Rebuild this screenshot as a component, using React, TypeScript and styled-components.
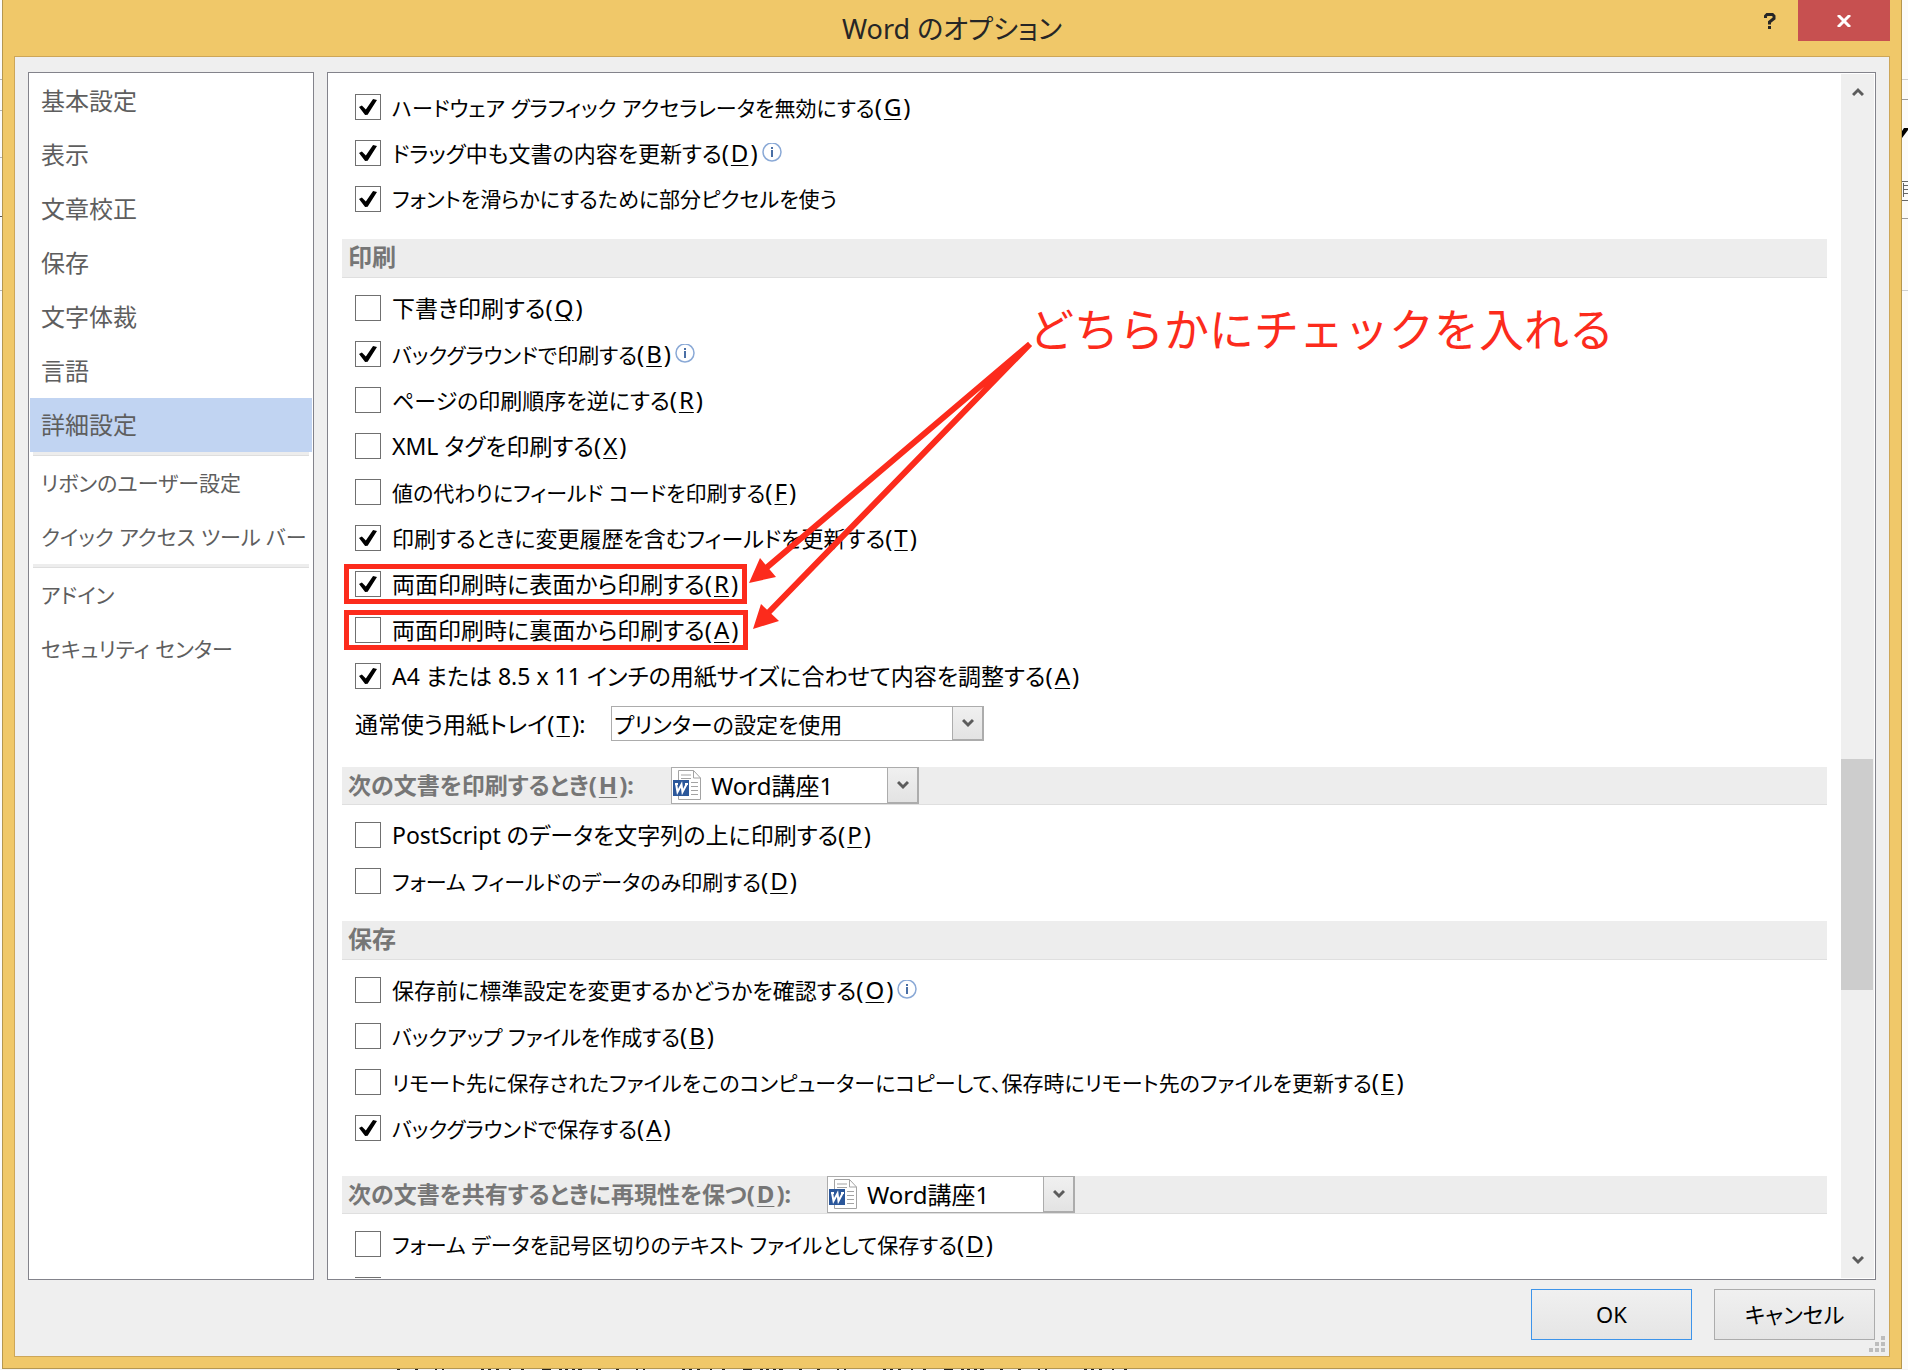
import React from "react";
import styled, { createGlobalStyle, css } from "styled-components";

const Global = createGlobalStyle`
  *, *::before, *::after { box-sizing: border-box; }
  body {
    margin: 0;
    background: #f4f4f4;
    font-family: "Noto Sans", "Noto Sans CJK JP", sans-serif;
    font-feature-settings: "palt";
    font-size: 22px;
    line-height: 30px;
    color: #000;
  }
  button, select, input { font: inherit; color: inherit; margin: 0; font-feature-settings: inherit; }
`;

const RED = "#fc2b1c";
const SIZES = { s: 21, m: 22, l: 23, xl: 24 };
type Size = keyof typeof SIZES;

const Desktop = styled.div`
  display: grid;
  grid-template-columns: 2px minmax(0, 1fr) 6px;
  grid-template-rows: minmax(0, 1fr) 1px;
  height: 100vh;
  overflow: hidden;
`;

const BackStrip = styled.svg`
  display: block;
  width: 100%;
  height: 100%;
  background: #fbfbfb;
`;

const BackFoot = styled.svg`
  display: block;
  grid-column: 1 / -1;
  width: 100%;
  height: 1px;
`;

const Dialog = styled.section`
  display: flex;
  flex-direction: column;
  min-height: 0;
  background: #f0c869;
  border: solid #b5974f;
  border-width: 0 1px 1px;
  padding: 0 11px 11px;
`;

const TitleBar = styled.header`
  display: grid;
  grid-template-columns: 1fr auto 1fr;
  height: 56px;
  flex: none;
`;

const Title = styled.h1`
  grid-column: 2;
  margin: 0;
  font-size: 27px;
  line-height: 58px;
  font-weight: 400;
  color: #262626;
`;

const WindowButtons = styled.div`
  display: flex;
  justify-content: flex-end;
`;

const CaptionButton = styled.button<{ $close?: boolean }>`
  display: flex;
  align-items: center;
  justify-content: center;
  width: ${(p) => (p.$close ? 92 : 56)}px;
  height: 41px;
  padding: 0;
  border: 0;
  background: ${(p) => (p.$close ? "#c75050" : "transparent")};
`;

const Client = styled.div`
  flex: 1;
  min-height: 0;
  display: flex;
  flex-direction: column;
  border: 1px solid #cda658;
  background: #efefef;
  padding: 15px 13px 0;
`;

const Panels = styled.div`
  flex: 1;
  min-height: 0;
  display: flex;
  gap: 13px;
`;

const Sidebar = styled.nav`
  width: 286px;
  flex: none;
  border: 1px solid #83838b;
  background: #fff;
  padding: 1px;
  display: flex;
  flex-direction: column;
`;

const NavItem = styled.button<{ $active?: boolean; $size: Size }>`
  display: block;
  flex: none;
  height: 54px;
  padding: 0 11px;
  border: 0;
  text-align: left;
  white-space: nowrap;
  font-size: ${(p) => SIZES[p.$size]}px;
  color: #5e5e5e;
  background: ${(p) => (p.$active ? "#c1d4f2" : "transparent")};
`;

const NavRule = styled.hr`
  flex: none;
  width: 276px;
  height: 4px;
  margin: 0 auto;
  border: 0;
  border-bottom: 1px solid #dedede;
  background: #ededed;
`;

const Pane = styled.main`
  position: relative;
  flex: 1;
  min-width: 0;
  display: flex;
  border: 1px solid #83838b;
  background: #fff;
  padding: 1px;
`;

const Content = styled.div`
  flex: 1;
  min-width: 0;
  overflow: hidden;
  padding: 10px 14px 0 13px;
`;

const SectionHead = styled.div<{ $wide?: boolean }>`
  display: flex;
  align-items: center;
  height: ${(p) => (p.$wide ? 38 : 39)}px;
  margin: 17px 0 7px;
  padding-left: 6px;
  background: #ededed;
  border-bottom: 1px solid #dfdfdf;
  color: #767676;
  font-weight: 700;
`;

const Spacer = styled.div`
  height: 8px;
`;

const HeadTitle = styled.h2`
  margin: 0;
  padding-bottom: 2px;
  font: inherit;
  font-size: 24px;
`;

const HeadLabel = styled.label<{ $w: number }>`
  width: ${(p) => p.$w}px;
  padding-bottom: 2px;
  font-size: 23px;
  white-space: nowrap;
`;

const KeyMark = styled.span`
  font-size: 24px;
  u {
    margin: 0 2px;
    text-decoration-thickness: 1px;
    text-underline-offset: 3px;
  }
`;

const Row = styled.div`
  display: flex;
  align-items: center;
  height: 46px;
  padding-left: 7px;
`;

const Option = styled.label<{ $marked?: boolean; $size: Size }>`
  display: flex;
  align-items: center;
  gap: 11px;
  height: 30px;
  padding: 0 4px 0 6px;
  font-size: ${(p) => SIZES[p.$size]}px;
  white-space: nowrap;
  ${(p) => p.$marked && css`outline: 5px solid ${RED};`}
`;

const Box = styled.input`
  appearance: none;
  display: grid;
  place-items: center;
  flex: none;
  width: 26px;
  height: 26px;
  border: 1px solid #707070;
  background: #fff;
  &:checked::before {
    content: "";
    width: 18px;
    height: 16px;
    background: #000;
    clip-path: polygon(0 50%, 16% 40%, 38% 66%, 78% 0, 100% 6%, 48% 98%, 34% 100%);
  }
`;

const InfoMark = styled.svg`
  flex: none;
  width: 20px;
  height: 20px;
`;

const TrayRow = styled.div`
  display: flex;
  align-items: center;
  height: 51px;
  padding: 0 0 2px 13px;
`;

const TrayLabel = styled.label`
  width: 256px;
  font-size: 23px;
  white-space: nowrap;
`;

const Combo = styled.div<{ $w: number; $h: number }>`
  position: relative;
  display: flex;
  width: ${(p) => p.$w}px;
  height: ${(p) => p.$h}px;
  flex: none;
  color: #000;
  font-weight: 400;
`;

const Picker = styled.select<{ $icon?: boolean }>`
  appearance: none;
  width: 100%;
  height: 100%;
  border: 1px solid #acacac;
  border-radius: 0;
  background: #fff;
  font-size: ${(p) => (p.$icon ? 24 : 22)}px;
  padding: 0 34px 0 ${(p) => (p.$icon ? 39 : 2)}px;
`;

const ComboArrow = styled.span`
  position: absolute;
  top: 1px;
  right: 0;
  bottom: 0;
  width: 32px;
  display: grid;
  place-items: center;
  border: 1px solid #acacac;
  border-width: 0 2px 2px 1px;
  background: linear-gradient(#f0f0f0, #e3e3e3);
  pointer-events: none;
`;

const DocIcon = styled.svg`
  position: absolute;
  left: 2px;
  top: 3px;
  width: 28px;
  height: 30px;
  pointer-events: none;
`;

const ScrollBar = styled.div`
  flex: none;
  display: flex;
  flex-direction: column;
  width: 33px;
  background: #efefef;
`;

const ScrollButton = styled.button`
  display: grid;
  place-items: center;
  flex: none;
  height: 36px;
  padding: 0;
  border: 0;
  background: transparent;
`;

const Track = styled.div`
  flex: 1;
  display: grid;
  grid-template-rows: 649fr 231fr 252fr;
`;

const Thumb = styled.div`
  grid-row: 2;
  width: 32px;
  background: #cdcdcd;
`;

const Arrows = styled.svg`
  position: absolute;
  left: 410px;
  top: 260px;
  width: 310px;
  height: 310px;
  pointer-events: none;
`;

const Note = styled.p`
  position: absolute;
  left: 701px;
  top: 221px;
  margin: 0;
  font-family: "Noto Sans CJK JP", sans-serif;
  font-feature-settings: normal;
  font-size: 45px;
  line-height: 68px;
  color: ${RED};
  white-space: nowrap;
`;

const Footer = styled.footer`
  flex: none;
  display: flex;
  justify-content: flex-end;
  gap: 22px;
  height: 76px;
  padding: 9px 1px 0 0;
  position: relative;
`;

const DialogButton = styled.button<{ $primary?: boolean }>`
  width: 161px;
  height: 51px;
  padding: 0 0 2px;
  border: 1px solid ${(p) => (p.$primary ? "#3d94ea" : "#acacac")};
  background: linear-gradient(#f0f0f0, #e5e5e5);
`;

const Grip = styled.svg`
  position: absolute;
  right: -9px;
  bottom: 4px;
  width: 16px;
  height: 16px;
`;

function Key({ k }: { k?: string }) {
  return k ? <KeyMark>(<u>{k}</u>)</KeyMark> : null;
}

function Info() {
  return (
    <InfoMark viewBox="0 0 20 20" role="img" aria-label="情報">
      <circle cx="10" cy="9" r="9" fill="#fff" stroke="#8aa9d6" strokeWidth="1.5" />
      <rect x="9" y="4" width="2" height="2" fill="#4a6fa5" />
      <rect x="9" y="7" width="2" height="7" fill="#4a6fa5" />
    </InfoMark>
  );
}

type Opt = { text: string; k?: string; on?: boolean; info?: boolean; marked?: boolean; size?: Size };

function OptionList({ items }: { items: Opt[] }) {
  return (
    <>
      {items.map((o) => (
        <Row key={o.text}>
          <Option $marked={o.marked} $size={o.size ?? "m"}>
            <Box type="checkbox" defaultChecked={o.on} />
            <span>{o.text}<Key k={o.k} /></span>
          </Option>
          {o.info && <Info />}
        </Row>
      ))}
    </>
  );
}

function Chevron({ up }: { up?: boolean }) {
  return (
    <svg width="12" height="10" viewBox="0 0 12 10" aria-hidden="true">
      <path d={up ? "M1 8 6 3 11 8" : "M1 2 6 7 11 2"} fill="none" stroke="#5c5c5c" strokeWidth="3" />
    </svg>
  );
}

function DocCombo({ id }: { id: string }) {
  return (
    <Combo $w={248} $h={37}>
      <Picker id={id} $icon>
        <option>Word講座1</option>
      </Picker>
      <DocIcon viewBox="0 0 28 30" aria-hidden="true">
        <path d="M5.500 .5H20.500L27.500 8V29.500H5.500Z" fill="#fff" stroke="#a3a3a3" />
        <path d="M20.500 .5V8H27.500" fill="none" stroke="#a3a3a3" />
        <path d="M8 5H18M8 8.500H18M18 12.500H25M18 16.500H25M18 20.500H25M18 24.500H25" stroke="#a3a3a3" />
        <rect x="0" y="10" width="16" height="16" fill="#2b579a" />
        <path d="M3 13.500 4.500 22 8.500 14.500 9.500 22 14 13.500M2 14H5M12 14H15" fill="none" stroke="#fff" strokeWidth="2" />
      </DocIcon>
      <ComboArrow><Chevron /></ComboArrow>
    </Combo>
  );
}

const display: Opt[] = [
  { text: "ハードウェア グラフィック アクセラレータを無効にする", k: "G", on: true, size: "s" },
  { text: "ドラッグ中も文書の内容を更新する", k: "D", on: true, info: true },
  { text: "フォントを滑らかにするために部分ピクセルを使う", on: true, size: "s" },
];

const print: Opt[] = [
  { text: "下書き印刷する", k: "Q", size: "l" },
  { text: "バックグラウンドで印刷する", k: "B", on: true, info: true, size: "s" },
  { text: "ページの印刷順序を逆にする", k: "R" },
  { text: "XML タグを印刷する", k: "X", size: "l" },
  { text: "値の代わりにフィールド コードを印刷する", k: "F", size: "s" },
  { text: "印刷するときに変更履歴を含むフィールドを更新する", k: "T", on: true },
  { text: "両面印刷時に表面から印刷する", k: "R", on: true, marked: true, size: "l" },
  { text: "両面印刷時に裏面から印刷する", k: "A", marked: true, size: "l" },
  { text: "A4 または 8.5 x 11 インチの用紙サイズに合わせて内容を調整する", k: "A", on: true, size: "l" },
];

const printDoc: Opt[] = [
  { text: "PostScript のデータを文字列の上に印刷する", k: "P", size: "l" },
  { text: "フォーム フィールドのデータのみ印刷する", k: "D", size: "s" },
];

const save: Opt[] = [
  { text: "保存前に標準設定を変更するかどうかを確認する", k: "O", info: true },
  { text: "バックアップ ファイルを作成する", k: "B", size: "s" },
  { text: "リモート先に保存されたファイルをこのコンピューターにコピーして、保存時にリモート先のファイルを更新する", k: "E", size: "s" },
  { text: "バックグラウンドで保存する", k: "A", on: true, size: "s" },
];

const share: Opt[] = [
  { text: "フォーム データを記号区切りのテキスト ファイルとして保存する", k: "D", size: "s" },
  { text: "" },
];

const nav: { size: Size; items: string[] }[] = [
  { size: "xl", items: ["基本設定", "表示", "文章校正", "保存", "文字体裁", "言語", "詳細設定"] },
  { size: "s", items: ["リボンのユーザー設定", "クイック アクセス ツール バー"] },
  { size: "s", items: ["アドイン", "セキュリティ センター"] },
];

export default function App() {
  return (
    <>
      <Global />
      <Desktop>
        <BackStrip aria-hidden="true">
          <path d="M0 79.500H2M0 110.500H2M0 157.500H2M0 290.500H2" stroke="#b4b4b4" />
          <path d="M0 216.500H2" stroke="#555" />
        </BackStrip>
        <Dialog aria-label="Word のオプション">
          <TitleBar>
            <Title>Word のオプション</Title>
            <WindowButtons>
              <CaptionButton aria-label="ヘルプ">
                <svg width="12" height="16" viewBox="0 0 12 16" aria-hidden="true">
                  <path d="M1.500 5V3L3 1.500H8.500L10 3V5.500L5.500 9V11.500" fill="none" stroke="#262626" strokeWidth="3" />
                  <rect x="4" y="13" width="3" height="3" fill="#262626" />
                </svg>
              </CaptionButton>
              <CaptionButton $close aria-label="閉じる">
                <svg width="14" height="12" viewBox="0 0 14 12" aria-hidden="true">
                  <path d="M1 0 13 12M13 0 1 12" stroke="#fff" strokeWidth="3" />
                </svg>
              </CaptionButton>
            </WindowButtons>
          </TitleBar>
          <Client>
            <Panels>
              <Sidebar>
                {nav.map((group, i) => (
                  <React.Fragment key={i}>
                    {i > 0 && <NavRule />}
                    {group.items.map((n) => (
                      <NavItem key={n} $size={group.size} $active={n === "詳細設定"}>{n}</NavItem>
                    ))}
                  </React.Fragment>
                ))}
              </Sidebar>
              <Pane>
                <Content>
                  <OptionList items={display} />
                  <SectionHead><HeadTitle>印刷</HeadTitle></SectionHead>
                  <OptionList items={print} />
                  <TrayRow>
                    <TrayLabel htmlFor="tray">通常使う用紙トレイ<Key k="T" />:</TrayLabel>
                    <Combo $w={373} $h={35}>
                      <Picker id="tray"><option>プリンターの設定を使用</option></Picker>
                      <ComboArrow><Chevron /></ComboArrow>
                    </Combo>
                  </TrayRow>
                  <SectionHead $wide>
                    <HeadLabel htmlFor="printdoc" $w={323}>次の文書を印刷するとき<Key k="H" />:</HeadLabel>
                    <DocCombo id="printdoc" />
                  </SectionHead>
                  <OptionList items={printDoc} />
                  <SectionHead><HeadTitle>保存</HeadTitle></SectionHead>
                  <OptionList items={save} />
                  <Spacer />
                  <SectionHead $wide>
                    <HeadLabel htmlFor="sharedoc" $w={479}>次の文書を共有するときに再現性を保つ<Key k="D" />:</HeadLabel>
                    <DocCombo id="sharedoc" />
                  </SectionHead>
                  <OptionList items={share} />
                </Content>
                <ScrollBar>
                  <ScrollButton aria-label="上へ"><Chevron up /></ScrollButton>
                  <Track><Thumb /></Track>
                  <ScrollButton aria-label="下へ"><Chevron /></ScrollButton>
                </ScrollBar>
                <Arrows viewBox="738 333 310 310" aria-hidden="true">
                  <path d="M1030 344 765 569M1030 344 768 613" stroke={RED} strokeWidth="6" />
                  <path d="M749 583 760 558 776 577ZM753 629 761 604 779 621Z" fill={RED} />
                </Arrows>
                <Note>どちらかにチェックを入れる</Note>
              </Pane>
            </Panels>
            <Footer>
              <DialogButton $primary>OK</DialogButton>
              <DialogButton>キャンセル</DialogButton>
              <Grip viewBox="0 0 16 16" aria-hidden="true">
                <path d="M12 0h4v4h-4zM6 6h4v4H6zM12 6h4v4h-4zM0 12h4v4H0zM6 12h4v4H6zM12 12h4v4h-4z" fill="#bdbdbd" />
              </Grip>
            </Footer>
          </Client>
        </Dialog>
        <BackStrip aria-hidden="true">
          <path d="M0 79.500H6M0 290.500H6" stroke="#cfcfcf" />
          <path d="M0 99.500H6M0 218.500H6" stroke="#9c9c9c" />
          <path d="M0 131 2 128H6V130L0 138Z" fill="#000" />
          <path d="M0 181.500H6M1.500 183V197M2 185.500H6M2 189.500H6M2 193.500H6M0 200.500H6" stroke="#666" />
        </BackStrip>
        <BackFoot aria-hidden="true">
          <path d="M397 .5H1136" stroke="#222" strokeDasharray="3 15 3 17 2 5 2 37 3 4 3 5 3 10 2 10 3 18 9 8 3 3 3 4 3 3 4 16" />
        </BackFoot>
      </Desktop>
    </>
  );
}
